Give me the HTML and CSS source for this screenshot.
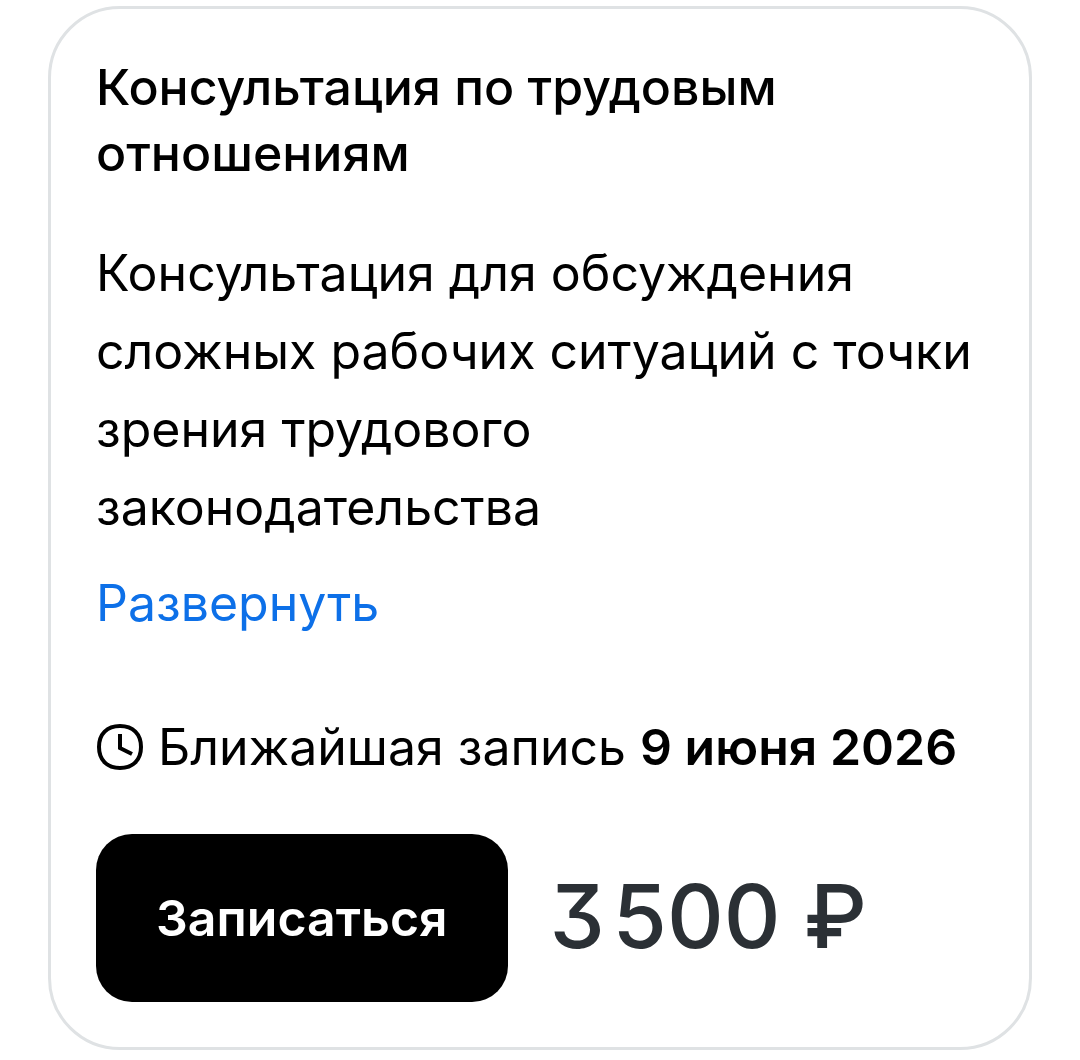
FILE: index.html
```html
<!DOCTYPE html>
<html lang="ru">
<head>
    <meta charset="UTF-8">
    <meta name="viewport" content="width=device-width, initial-scale=1.0">
    <title>Консультация по трудовым отношениям</title>
    <link rel="stylesheet" href="styles.css">
</head>
<body>
    <article class="card">
        <h2 class="card-title">Консультация по трудовым отношениям</h2>
        <p class="card-text">Консультация для обсуждения сложных рабочих ситуаций с точки зрения трудового законодательства</p>
        <a class="card-more" href="#">Развернуть</a>

        <div class="card-date">
            <svg class="clock" viewBox="0 0 48 48" fill="none" stroke="currentColor" stroke-width="4" aria-hidden="true">
                <path d="M24 3C37 3 45 11 45 24S37 45 24 45 3 37 3 24 11 3 24 3Z"/>
                <path d="M24 11v14l12 6"/>
            </svg>
            <p>Ближайшая запись <b>9 июня 2026</b></p>
        </div>

        <div class="card-footer">
            <button class="card-button" type="button">Записаться</button>
            <span class="card-price">3&#8202;500 ₽</span>
        </div>
    </article>
</body>
</html>
```
FILE: styles.css
```css
* {
    box-sizing: border-box;
}

body {
    margin: 0;
    padding: 6px 48px 10px;
    background-color: #ffffff;
    color: #000000;
    font-family: Inter, sans-serif;
}

.card {
    padding: 45px;
    border: 3px solid #dfe2e4;
    border-radius: 72px;
}

.card-title {
    margin: 0;
    max-width: 800px;
    font-size: 50px;
    font-weight: 500;
    line-height: 66px;
}

.card-text {
    margin: 48px 0 0;
    font-size: 50px;
    line-height: 78px;
}

.card-more {
    display: block;
    margin-top: 18px;
    color: #0d70e8;
    font-size: 50px;
    line-height: 78px;
    text-decoration: none;
}

/* Nearest free date */
.card-date {
    display: flex;
    align-items: center;
    gap: 14px;
    margin-top: 66px;
    font-size: 50px;
    line-height: 78px;
}

.card-date p {
    margin: 0;
}

.card-date b {
    font-weight: 600;
}

.clock {
    flex: none;
    width: 48px;
    height: 48px;
}

/* Button and price */
.card-footer {
    display: flex;
    align-items: center;
    gap: 42px;
    margin-top: 48px;
}

.card-button {
    padding: 48px 60px;
    border: 0;
    border-radius: 36px;
    background-color: #000000;
    color: #ffffff;
    font: inherit;
    font-size: 50px;
    font-weight: 600;
    line-height: 72px;
}

.card-price {
    padding-bottom: 4px;
    color: #2b3035;
    font-size: 88px;
    font-weight: 500;
    font-feature-settings: "cv09"; /* flat-top three */
    line-height: 108px;
}
```
